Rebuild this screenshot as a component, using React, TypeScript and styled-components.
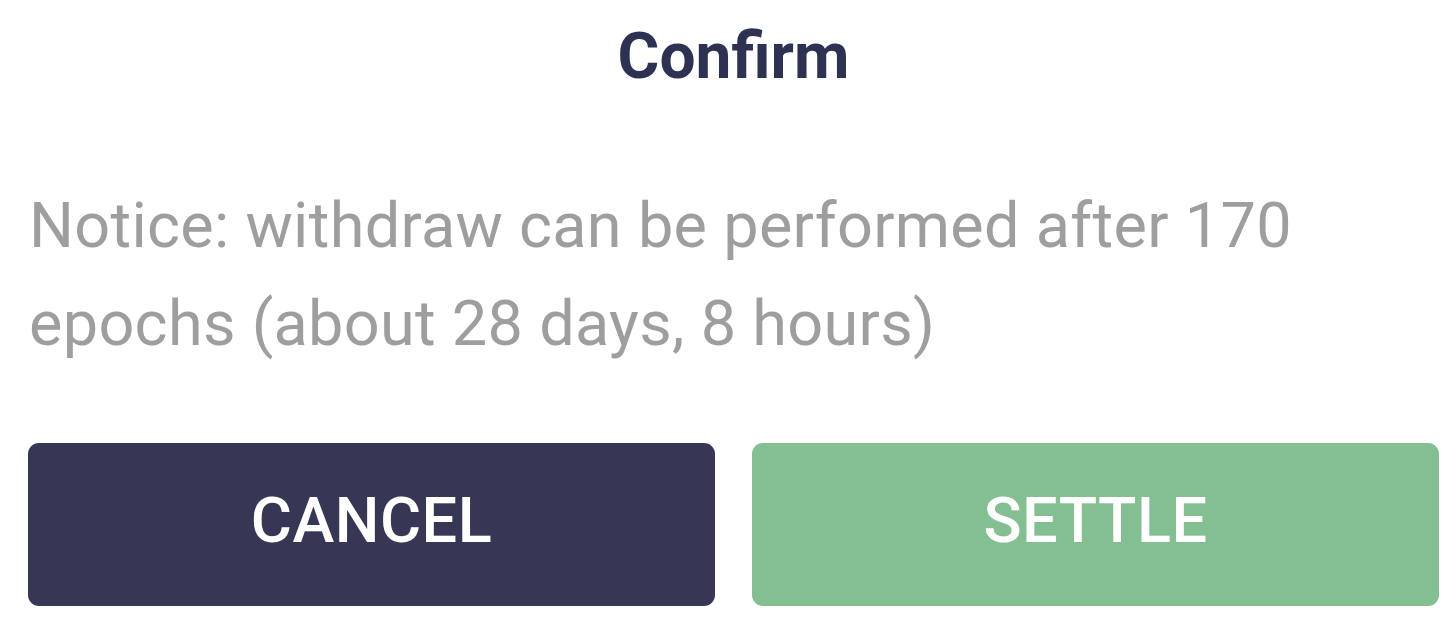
import React, { FC } from 'react';
import styled, { createGlobalStyle } from 'styled-components';

const GlobalStyle = createGlobalStyle`
  html, body {
    margin: 0;
    padding: 0;
    background: #fff;
  }
  body {
    font-family: Roboto, 'Liberation Sans', sans-serif;
  }
`;

const Dialog = styled.div`
  width: 1456px;
  height: 640px;
  box-sizing: border-box;
  padding: 25px 17px 0 28px;
  display: flex;
  flex-direction: column;
  background: #fff;
`;

const Title = styled.h1`
  margin: 0;
  font-size: 64px;
  line-height: 64px;
  font-weight: 700;
  color: #2d3152;
  text-align: center;
`;

const Message = styled.p`
  margin: 88px 0 0 1px;
  font-size: 63px;
  line-height: 98px;
  letter-spacing: 0.3px;
  font-weight: 400;
  color: #9e9e9e;
`;

const Actions = styled.div`
  margin-top: 70px;
  display: grid;
  grid-template-columns: 1fr 1fr;
  gap: 37px;
`;

const Button = styled.button<{ $bg: string }>`
  height: 163px;
  border: none;
  border-radius: 11px;
  background: ${(p) => p.$bg};
  color: #fff;
  font-family: Roboto, 'Liberation Sans', sans-serif;
  font-size: 63px;
  font-weight: 500;
  letter-spacing: 0.5px;
  text-transform: uppercase;
  padding: 0 0 8px;
  display: flex;
  align-items: center;
  justify-content: center;
  cursor: pointer;
`;

interface ConfirmProps {
  epochs: number;
  duration: string;
}

const Confirm: FC<ConfirmProps> = ({ epochs, duration }) => (
  <Dialog>
    <Title>Confirm</Title>
    <Message>
      Notice: withdraw can be performed after {epochs} epochs ({duration})
    </Message>
    <Actions>
      <Button $bg="#363755">Cancel</Button>
      <Button $bg="#84bf91">Settle</Button>
    </Actions>
  </Dialog>
);

const App: FC = () => (
  <>
    <GlobalStyle />
    <Confirm epochs={170} duration="about 28 days, 8 hours" />
  </>
);

export default App;
